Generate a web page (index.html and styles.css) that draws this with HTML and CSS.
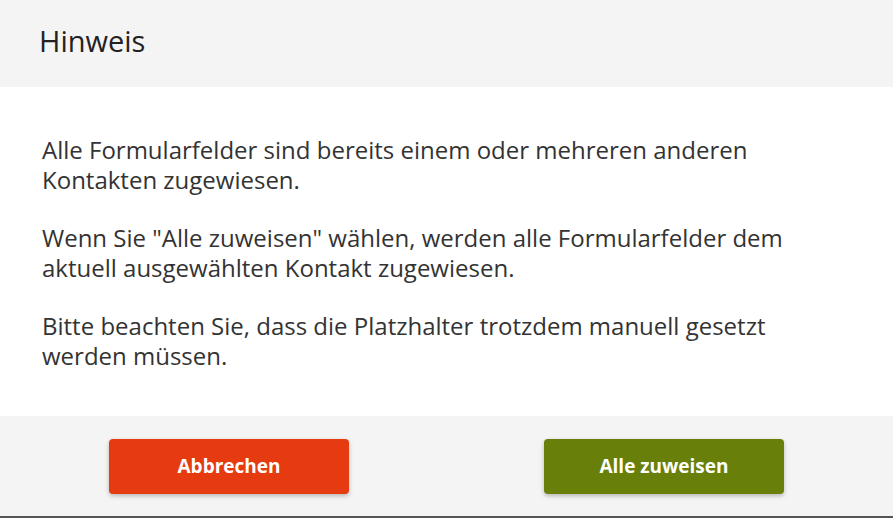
FILE: index.html
```html
<!DOCTYPE html>
<html lang="de">
<head>
    <meta charset="UTF-8">
    <meta name="viewport" content="width=device-width, initial-scale=1.0">
    <title>Hinweis</title>
    <link rel="stylesheet" href="styles.css">
</head>
<body>
    <div class="dialog">
        <div class="dialog-head">
            <h2 class="title">Hinweis</h2>
        </div>
        <div class="dialog-body">
            <p>Alle Formularfelder sind bereits einem oder mehreren anderen Kontakten zugewiesen.</p>
            <p>Wenn Sie "Alle zuweisen" wählen, werden alle Formularfelder dem aktuell ausgewählten Kontakt zugewiesen.</p>
            <p>Bitte beachten Sie, dass die Platzhalter trotzdem manuell gesetzt werden müssen.</p>
        </div>
        <div class="dialog-foot">
            <button class="btn cancel-btn">Abbrechen</button>
            <button class="btn ok-btn">Alle zuweisen</button>
        </div>
    </div>
</body>
</html>
```

FILE: styles.css
```css
body {
    margin: 0;
    font-family: 'Open Sans', 'Noto Sans', sans-serif;
    background-color: #555;
}

.dialog {
    width: 893px;
    height: 516px;
    display: flex;
    flex-direction: column;
    background-color: #fff;
}

.dialog-head {
    height: 87px;
    background-color: #f4f4f4;
    display: flex;
    align-items: center;
    padding: 0 39px 6px;
    box-sizing: border-box;
}

.title {
    margin: 0;
    font-size: 29px;
    font-weight: 400;
    color: #222;
}

.dialog-body {
    flex: 1;
    padding: 48px 42px 0;
}

.dialog-body p {
    margin: 0 0 28px;
    font-size: 24px;
    line-height: 30px;
    color: #333;
    max-width: 790px;
}

.dialog-foot {
    height: 100px;
    background-color: #f4f4f4;
    display: flex;
    justify-content: space-between;
    align-items: center;
    padding: 0 109px;
    box-sizing: border-box;
}

.btn {
    width: 240px;
    height: 55px;
    border: none;
    border-radius: 4px;
    color: #fff;
    font-family: 'Open Sans', sans-serif;
    font-size: 19px;
    font-weight: 700;
    cursor: pointer;
    box-shadow: 0 2px 4px rgba(0, 0, 0, 0.25);
}

.cancel-btn {
    background-color: #e63a10;
}

.ok-btn {
    background-color: #687f0a;
}
```
